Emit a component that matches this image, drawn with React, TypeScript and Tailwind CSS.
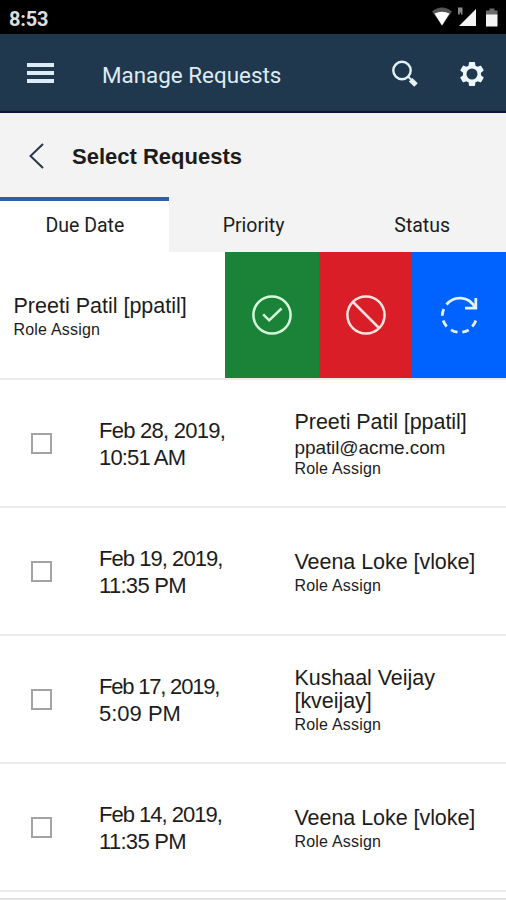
import React from 'react';
import { clsx } from 'clsx';

const TABS = ['Due Date', 'Priority', 'Status'];

const REQUESTS = [
  {
    date: 'Feb 28, 2019,', time: '10:51 AM', name: ['Preeti Patil [ppatil]'], email: 'ppatil@acme.com',
    dateClass: 'tracking-[-0.75px]', timeClass: 'tracking-[-0.85px]',
  },
  {
    date: 'Feb 19, 2019,', time: '11:35 PM', name: ['Veena Loke [vloke]'],
    dateClass: 'tracking-[-0.95px]', timeClass: 'tracking-[-0.7px]',
  },
  {
    date: 'Feb 17, 2019,', time: '5:09 PM', name: ['Kushaal Veijay', '[kveijay]'],
    dateClass: 'tracking-[-1.2px]', timeClass: 'tracking-[0px]',
  },
  {
    date: 'Feb 14, 2019,', time: '11:35 PM', name: ['Veena Loke [vloke]'],
    dateClass: 'tracking-[-1px]', timeClass: 'tracking-[-0.7px]',
  },
];

function StatusBar() {
  return (
    <div className="flex h-[34px] items-center justify-between bg-black pl-[9px] pt-[3px] font-['Roboto',sans-serif]">
      <span className="text-[20px] font-bold leading-none tracking-[-0.2px] text-[#dedede]">8:53</span>
      <svg width="76" height="24" viewBox="430 6 76 24" className="-mt-[3px]">
        <path d="M432 12.5Q442 4.5 452 12.5L442 26.5Z" fill="#555" />
        <path d="M434.5 14.6Q442 10.8 449.5 14.6L442 26.5Z" fill="#fff" />
        <path d="M459 27L476 10V27Z" fill="#f4f4f4" />
        <path d="M458 8.500h4.500v7H461v-2h-1.200v2H458Z" fill="#8a8a8a" />
        <path d="M489.500 9.500h5v2h3v4.500h-11.500v-4.500h3.500Z" fill="#6b6b6b" />
        <path d="M486 15.500h11.500v12h-11.500Z" fill="#f4f4f4" />
      </svg>
    </div>
  );
}

function Header() {
  return (
    <header className="flex h-[79px] items-center border-b-2 border-[#0c1740] bg-[#20384d] pl-[27px] pr-[19px] font-['Roboto',sans-serif]">
      <button className="mt-[1px] flex w-[27px] flex-col gap-[4px]" aria-label="Menu">
        <span className="h-[4px] bg-[#dcecf7]" />
        <span className="h-[4px] bg-[#dcecf7]" />
        <span className="h-[4px] bg-[#dcecf7]" />
      </button>
      <h1 className="ml-[48px] mt-[5px] flex-1 whitespace-nowrap text-[22.400px] leading-none text-[#deebf5]">Manage Requests</h1>
      <svg width="30" height="30" viewBox="390 59 30 30" className="mr-[37px] mt-[3px]" fill="none" stroke="#e4f2fb">
        <circle cx="402" cy="70.500" r="8.700" strokeWidth="2.400" />
        <path d="M408 76.500l3 3" strokeWidth="1.800" />
        <path d="M410.600 79.800l5.400 5.200" strokeWidth="5" />
      </svg>
      <svg width="30" height="30" viewBox="0 0 24 24" className="mt-[2px]" fill="#eef7fd" fillRule="evenodd">
        <path d="M19.140 12.940c.04-.3.06-.61.06-.94 0-.32-.02-.64-.07-.94l2.030-1.580c.18-.14.23-.41.12-.61l-1.920-3.320c-.12-.22-.37-.29-.59-.22l-2.390.96c-.5-.38-1.030-.7-1.620-.94l-.36-2.540c-.04-.24-.24-.41-.48-.41h-3.840c-.24 0-.43.17-.47.41l-.36 2.540c-.59.24-1.130.57-1.620.94l-2.390-.96c-.22-.08-.47 0-.59.22L2.740 8.870c-.12.21-.08.47.12.61l2.030 1.580c-.05.3-.09.63-.09.94s.02.64.07.94l-2.030 1.580c-.18.14-.23.41-.12.61l1.920 3.320c.12.22.37.29.59.22l2.390-.96c.5.38 1.030.7 1.620.94l.36 2.540c.05.24.24.41.48.41h3.840c.24 0 .44-.17.47-.41l.36-2.540c.59-.24 1.130-.56 1.620-.94l2.390.96c.22.08.47 0 .59-.22l1.920-3.320c.12-.22.07-.47-.12-.61l-2.010-1.580zM12 16.400a4.400 4.400 0 1 1 0-8.800 4.400 4.400 0 0 1 0 8.800z" />
      </svg>
    </header>
  );
}

function SwipeActions() {
  return (
    <div className="flex h-[126px]">
      <button className="flex w-[94px] items-center justify-center bg-[#1b8338]" aria-label="Approve">
        <svg width="42" height="42" viewBox="0 0 42 42" fill="none" stroke="#d5fbdb" strokeWidth="2.500">
          <circle cx="21" cy="21" r="18.600" />
          <path d="M12.200 20.300l6 6L30.500 14.500" />
        </svg>
      </button>
      <button className="flex w-[93px] items-center justify-center bg-[#da1e28]" aria-label="Reject">
        <svg width="42" height="42" viewBox="0 0 42 42" fill="none" stroke="#ffe3df" strokeWidth="2.500">
          <circle cx="21" cy="21" r="18.600" />
          <path d="M8 8l26 26" />
        </svg>
      </button>
      <button className="flex w-[94px] items-center justify-center bg-[#0062ff]" aria-label="Redirect">
        <svg width="42" height="42" viewBox="438 294 42 42" fill="none" stroke="#e2f3ff" strokeWidth="2.800">
          <path d="M446.500 304.500C454 295.500 468.500 295.500 475 307.500" />
          <path d="M475.800 298v10.200H465" />
          <path d="M443.800 309.200Q442.300 312 442.300 315.700M443.200 320.500Q444.200 323.800 446.700 326.500M451 329.800Q454 331.800 457.500 332.200M462.300 332.200Q465.800 331.800 468.700 330M472.200 326.500Q474.800 323.800 475.800 320.500" />
        </svg>
      </button>
    </div>
  );
}

export default function App() {
  return (
    <div className="flex h-[900px] w-[506px] flex-col overflow-hidden bg-white font-['Liberation_Sans',Arial,sans-serif] text-[#1c1c1c]">
      <StatusBar />
      <Header />

      <section className="h-[139px] bg-[#f3f3f3]">
        <div className="flex h-[84px] items-center pl-[29px] pt-[2px]">
          <svg width="16" height="26" viewBox="0 0 16 26" fill="none" stroke="#24384a" strokeWidth="2">
            <path d="M14 1L1.500 13 14 25" />
          </svg>
          <h2 className="ml-[27px] mt-[2px] whitespace-nowrap text-[22px] font-bold leading-none">Select Requests</h2>
        </div>
        <nav className="flex h-[55px] font-['Roboto',sans-serif] text-[19.500px] leading-none">
          {TABS.map((tab, i) => (
            <button
              key={tab}
              className={clsx(
                'flex flex-1 items-center justify-center border-t-4 pb-[1px] pl-[1px]',
                i === 0 ? 'border-[#2e60aa] bg-white' : 'border-transparent'
              )}
            >
              {tab}
            </button>
          ))}
        </nav>
      </section>

      <div className="flex h-[128px] items-start justify-between border-b-2 border-[#ebebeb]">
        <div className="flex h-[126px] flex-col justify-center whitespace-nowrap pl-[13.500px] pt-[5px]">
          <div className="mb-[2px] text-[21.500px] leading-[23px]">Preeti Patil [ppatil]</div>
          <div className="text-[16px] leading-[20px] tracking-[0.2px]">Role Assign</div>
        </div>
        <SwipeActions />
      </div>

      {REQUESTS.map(({ date, time, name, email, dateClass, timeClass }) => (
        <div key={date} className="flex h-[128px] flex-shrink-0 items-center border-b-2 border-[#ebebeb] whitespace-nowrap">
          <span className="ml-[31px] h-[21px] w-[21px] border-2 border-[#a3a3a3]" />
          <div className="ml-[47px] w-[195.500px] pt-[1px] text-[22px] leading-[27px]">
            <div className={dateClass}>{date}</div>
            <div className={timeClass}>{time}</div>
          </div>
          <div className={name.length > 1 || email ? 'pt-[3px]' : 'pt-[5px]'}>
            <div className="mb-[2px] text-[21.500px] leading-[23px] tracking-[-0.05px]">
              {name.map((line) => (
                <div key={line}>{line}</div>
              ))}
            </div>
            {email && <div className="text-[19px] leading-[23px] tracking-[-0.1px]">{email}</div>}
            <div className="text-[16px] leading-[20px] tracking-[0.2px]">Role Assign</div>
          </div>
        </div>
      ))}
      <div className="mt-[6px] h-[2px] flex-shrink-0 bg-[#e2e2e2]" />
    </div>
  );
}
